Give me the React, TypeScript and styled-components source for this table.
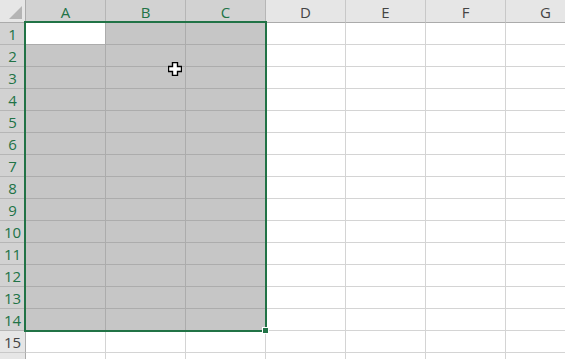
import React from "react";
import styled, { createGlobalStyle } from "styled-components";

const Global = createGlobalStyle`
  html, body { margin: 0; padding: 0; background: #fff; overflow: hidden; }
  body { font-family: "Open Sans", "Liberation Sans", sans-serif; }
`;

const COLS = ["A", "B", "C", "D", "E", "F", "G"];
const ROWS = 16;
const LABELLED_ROWS = 15;
const SEL_COLS = 3;
const SEL_ROWS = 14;

const Sheet = styled.div`
  position: relative;
  width: 565px;
  height: 359px;
  overflow: hidden;
`;

const Grid = styled.div`
  display: grid;
  grid-template-columns: 26px repeat(${COLS.length}, 80px);
  grid-auto-rows: 22px;
  grid-template-rows: 23px;
`;

const Corner = styled.div`
  position: relative;
  background: #e6e6e6;
  border-right: 1px solid #ababab;
  border-bottom: 1px solid #ababab;
  &::after {
    content: "";
    position: absolute;
    right: 3px;
    bottom: 3px;
    width: 0;
    height: 0;
    border-left: 13px solid transparent;
    border-bottom: 13px solid #b4b4b4;
  }
`;

const ColHead = styled.div<{ $sel: boolean }>`
  display: flex;
  align-items: center;
  justify-content: center;
  box-sizing: border-box;
  background: ${(p) => (p.$sel ? "#d2d2d2" : "#e6e6e6")};
  color: ${(p) => (p.$sel ? "#217346" : "#444")};
  border-right: 1px solid ${(p) => (p.$sel ? "#b6b6b6" : "#c8c8c8")};
  border-bottom: 1px solid #ababab;
  font-size: 15px;
  padding-top: 1px;
`;

const RowHead = styled.div<{ $sel: boolean }>`
  display: flex;
  align-items: center;
  justify-content: center;
  box-sizing: border-box;
  background: ${(p) => (p.$sel ? "#d2d2d2" : "#e6e6e6")};
  color: ${(p) => (p.$sel ? "#217346" : "#444")};
  border-right: 1px solid #ababab;
  border-bottom: 1px solid ${(p) => (p.$sel ? "#b6b6b6" : "#c8c8c8")};
  font-size: 15px;
`;

const Cell = styled.div<{ $sel: boolean; $active: boolean }>`
  box-sizing: border-box;
  background: ${(p) => (p.$active ? "#fff" : p.$sel ? "#c6c6c6" : "#fff")};
  border-right: 1px solid ${(p) => (p.$sel ? "#acacac" : "#d4d4d4")};
  border-bottom: 1px solid ${(p) => (p.$sel ? "#acacac" : "#d4d4d4")};
`;

/* Green outline of the selected range A1:C14, drawn over the cells */
const Selection = styled.div`
  position: absolute;
  left: 24px;
  top: 21px;
  width: 243px;
  height: 311px;
  box-sizing: border-box;
  border: 2px solid #217346;
  pointer-events: none;
`;

/* Fill handle at the bottom-right corner of the selection */
const Handle = styled.div`
  position: absolute;
  right: -4px;
  bottom: -4px;
  width: 5px;
  height: 5px;
  background: #217346;
  border: 1px solid #fff;
`;

/* Excel's white-cross mouse pointer */
const Pointer = styled.svg`
  position: absolute;
  left: 168px;
  top: 62px;
`;

export default function App() {
  const cells: React.ReactNode[] = [];
  cells.push(<Corner key="corner" />);
  COLS.forEach((c, i) => cells.push(<ColHead key={c} $sel={i < SEL_COLS}>{c}</ColHead>));
  for (let r = 1; r <= ROWS; r++) {
    const rowSel = r <= SEL_ROWS;
    cells.push(
      <RowHead key={`h${r}`} $sel={rowSel}>
        {r <= LABELLED_ROWS ? r : ""}
      </RowHead>
    );
    COLS.forEach((c, i) => {
      const sel = rowSel && i < SEL_COLS;
      cells.push(<Cell key={`${c}${r}`} $sel={sel} $active={r === 1 && i === 0} />);
    });
  }
  return (
    <>
      <Global />
      <Sheet>
        <Grid>{cells}</Grid>
        <Selection>
          <Handle />
        </Selection>
        <Pointer width="14" height="14" viewBox="0 0 14 14">
          <path
            d="M4.5 0.5h5v4h4v5h-4v4h-5v-4h-4v-5h4z"
            fill="#fff"
            stroke="#000"
            strokeWidth="1.4"
          />
        </Pointer>
      </Sheet>
    </>
  );
}
